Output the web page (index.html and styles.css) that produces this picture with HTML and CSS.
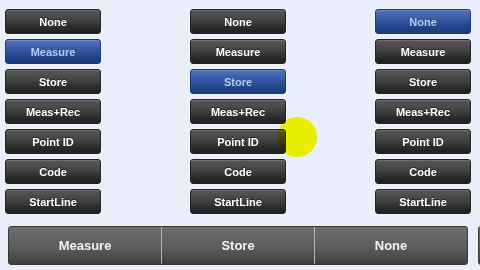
FILE: index.html
```
<!DOCTYPE html>
<html>
<head>
<meta charset="utf-8">
<link rel="stylesheet" href="styles.css">
</head>
<body>
<div class="screen">
  <div class="columns">
    <div class="col">
      <div class="btn">None</div>
      <div class="btn active">Measure</div>
      <div class="btn">Store</div>
      <div class="btn">Meas+Rec</div>
      <div class="btn">Point ID</div>
      <div class="btn">Code</div>
      <div class="btn">StartLine</div>
    </div>
    <div class="col">
      <div class="btn">None</div>
      <div class="btn">Measure</div>
      <div class="btn active">Store</div>
      <div class="btn">Meas+Rec</div>
      <div class="btn">Point ID</div>
      <div class="btn">Code</div>
      <div class="btn">StartLine</div>
    </div>
    <div class="col">
      <div class="btn active">None</div>
      <div class="btn">Measure</div>
      <div class="btn">Store</div>
      <div class="btn">Meas+Rec</div>
      <div class="btn">Point ID</div>
      <div class="btn">Code</div>
      <div class="btn">StartLine</div>
    </div>
    <div class="col">
      <div class="btn"></div>
      <div class="btn"></div>
      <div class="btn"></div>
      <div class="btn"></div>
      <div class="btn"></div>
      <div class="btn"></div>
      <div class="btn"></div>
    </div>
  </div>
  <div class="bars">
    <div class="bar">
      <div class="seg">Measure</div>
      <div class="seg">Store</div>
      <div class="seg">None</div>
    </div>
    <div class="bar">
      <div class="seg"></div>
    </div>
  </div>
  <div class="cursor"></div>
</div>
</body>
</html>
```
FILE: styles.css
```
html, body {
  margin: 0;
  padding: 0;
  width: 480px;
  height: 270px;
  overflow: hidden;
  background: #e9eefa;
}
.screen {
  position: relative;
  width: 480px;
  height: 270px;
  overflow: hidden;
  font-family: "Liberation Sans", Arial, sans-serif;
  font-weight: bold;
  color: #fff;
}
.columns {
  display: flex;
  gap: 89px;
  padding: 9px 0 0 5px;
}
.col {
  display: flex;
  flex-direction: column;
  gap: 5px;
  flex: 0 0 96px;
  width: 96px;
}
.btn {
  box-sizing: border-box;
  height: 25px;
  border-radius: 3px;
  border: 1px solid #222;
  background: linear-gradient(#585858 0%, #424242 45%, #2c2c2c 75%, #1f1f1f 100%);
  box-shadow: inset 0 1px 0 rgba(255,255,255,0.15), 0 0 0 1px rgba(255,255,255,0.35);
  display: flex;
  align-items: center;
  justify-content: center;
  font-size: 11px;
  color: #fff;
  text-shadow: 0 -1px 0 rgba(0,0,0,0.5);
}
.btn.active {
  border-color: #1b3576;
  background: linear-gradient(#5274c0 0%, #33569f 45%, #234489 75%, #1d3a7c 100%);
  color: #b6c9f2;
  text-shadow: none;
}
.bars {
  display: flex;
  gap: 10px;
  margin: 12px 0 0 8px;
}
.bar {
  flex: 0 0 460px;
  box-sizing: border-box;
  height: 39px;
  display: flex;
  border-radius: 3px;
  border: 1px solid #3a3a3a;
  background: linear-gradient(#6e6e6e 0%, #5c5c5c 55%, #4c4c4c 82%, #3c3c3c 100%);
  overflow: hidden;
}
.seg {
  flex: 1;
  display: flex;
  align-items: center;
  justify-content: center;
  font-size: 13px;
  color: #f2f2f2;
  border-left: 1px solid #b4b4b4;
}
.seg:first-child {
  border-left: none;
}
.cursor {
  position: absolute;
  left: 277px;
  top: 117px;
  width: 40px;
  height: 40px;
  border-radius: 50%;
  background: #ffff00;
  mix-blend-mode: multiply;
}
```
